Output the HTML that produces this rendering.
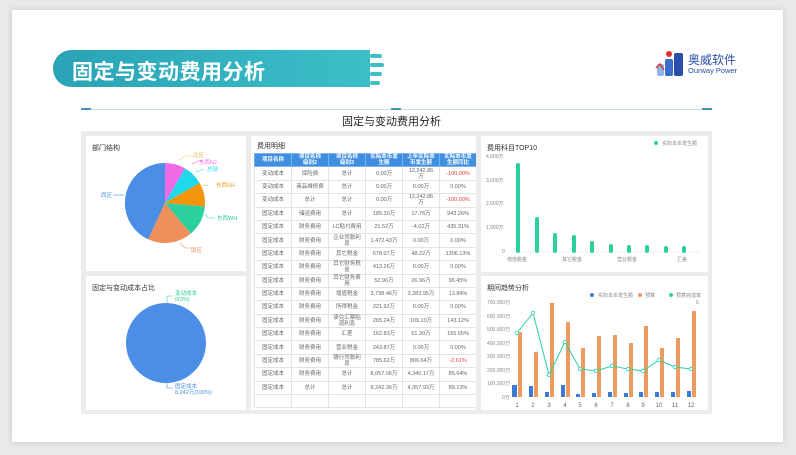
<!DOCTYPE html>
<html><head><meta charset="utf-8"><style>
*{margin:0;padding:0;box-sizing:border-box}
body{width:796px;height:455px;background:#e9e9e9;position:relative;overflow:hidden;font-family:"Liberation Sans","Noto Sans CJK SC",sans-serif}
.slide{position:absolute;left:12px;top:10px;width:771px;height:432px;background:#fff;box-shadow:0 0 6px rgba(0,0,0,.15)}
.abs{position:absolute}
.dash{position:absolute;left:81px;top:131px;width:631px;height:283px;background:#ececec}
.panel{position:absolute;background:#fff;overflow:hidden}
.pt{position:absolute;left:6px;top:7px;font-size:7px;color:#333}
table{border-collapse:collapse;position:absolute;left:3px;top:17px;width:223px;font-size:5.5px;color:#666;table-layout:fixed}
td,th{border:1px solid #e3e3e3;text-align:center;height:13.4px;line-height:6px;padding:0 1px}
th{background:#3f8ee0;color:#fff;font-weight:bold;border-color:#7fb3ea}
.r{color:#e53b3b}
</style></head><body>
<div class="slide"></div>
<div class="abs" style="left:53px;top:50px;width:330px;height:37px;border-radius:19px 0 0 19px;background:linear-gradient(90deg,#2aa3b7,#3cc0c8)"></div>
<div class="abs" style="left:370px;top:50px;width:20px;height:37px;background:#fff"></div>
<div class="abs" style="left:370px;top:54px;width:12px;height:4px;border-radius:2px;background:#3cc0c8"></div>
<div class="abs" style="left:370px;top:63px;width:14px;height:4px;border-radius:2px;background:#3cc0c8"></div>
<div class="abs" style="left:370px;top:72px;width:12px;height:4px;border-radius:2px;background:#3cc0c8"></div>
<div class="abs" style="left:370px;top:81px;width:10px;height:4px;border-radius:2px;background:#3cc0c8"></div>
<div class="abs" style="left:72px;top:56px;font-size:21px;font-weight:bold;color:#fff;letter-spacing:0.5px">固定与变动费用分析</div>
<svg class="abs" style="left:655px;top:48px" width="30" height="30" viewBox="0 0 30 30">
<rect x="2" y="16" width="7" height="12" rx="2" fill="#8fb7e6"/>
<path d="M1 20 L5 16 L9 22" stroke="#d33" stroke-width="1.5" fill="none"/>
<circle cx="14" cy="6" r="3" fill="#d33"/>
<rect x="10" y="11" width="8" height="17" rx="2" fill="#3a6fc9"/>
<rect x="19" y="5" width="9" height="23" rx="2" fill="#2a4fa8"/>
</svg>
<div class="abs" style="left:688px;top:51px;font-size:12px;color:#2a4fa8">奥威软件</div>
<div class="abs" style="left:688px;top:66px;font-size:7.5px;color:#2a4fa8">Ourway Power</div>
<div class="abs" style="left:81px;top:109px;width:631px;height:1px;background:#c9dbe3"></div>
<div class="abs" style="left:81px;top:108px;width:10px;height:2px;background:#4a90b8"></div>
<div class="abs" style="left:391px;top:108px;width:10px;height:2px;background:#4a90b8"></div>
<div class="abs" style="left:702px;top:108px;width:10px;height:2px;background:#4a90b8"></div>
<div class="abs" style="left:342px;top:113px;font-size:11px;color:#222">固定与变动费用分析</div>
<div class="dash">
 <div class="panel" style="left:5px;top:5px;width:160px;height:135px"><div class="pt">部门结构</div></div>
 <div class="panel" style="left:5px;top:145px;width:160px;height:134px"><div class="pt">固定与变动成本占比</div></div>
 <div class="panel" style="left:170px;top:5px;width:225px;height:274px"><div class="pt" style="top:5px">费用明细</div>
 <table>
 <tr><th>项目名称</th><th>项目名称<br>级别2</th><th>项目名称<br>级别3</th><th>实际本币发<br>生额</th><th>上年实际本<br>币发生额</th><th>实际本币发<br>生额同比</th></tr>
 <tr><td>变动成本</td><td>保险费</td><td>总计</td><td>0.00万</td><td>12,242.86<br>万</td><td class="r">-100.00%</td></tr>
 <tr><td>变动成本</td><td>商品维修费</td><td>总计</td><td>0.00万</td><td>0.00万</td><td>0.00%</td></tr>
 <tr><td>变动成本</td><td>总计</td><td>总计</td><td>0.00万</td><td>12,242.86<br>万</td><td class="r">-100.00%</td></tr>
 <tr><td>固定成本</td><td>储运费用</td><td>总计</td><td>185.30万</td><td>17.76万</td><td>943.26%</td></tr>
 <tr><td>固定成本</td><td>财务费用</td><td>LC贴付费用</td><td>21.52万</td><td>-4.02万</td><td>435.31%</td></tr>
 <tr><td>固定成本</td><td>财务费用</td><td>企业贷款利<br>息</td><td>1,472.43万</td><td>0.00万</td><td>0.00%</td></tr>
 <tr><td>固定成本</td><td>财务费用</td><td>其它税金</td><td>678.07万</td><td>48.22万</td><td>1306.13%</td></tr>
 <tr><td>固定成本</td><td>财务费用</td><td>其它财务税<br>金</td><td>413.26万</td><td>0.00万</td><td>0.00%</td></tr>
 <tr><td>固定成本</td><td>财务费用</td><td>其它财务费<br>用</td><td>52.96万</td><td>26.96万</td><td>96.45%</td></tr>
 <tr><td>固定成本</td><td>财务费用</td><td>增值税金</td><td>3,738.46万</td><td>3,283.95万</td><td>13.84%</td></tr>
 <tr><td>固定成本</td><td>财务费用</td><td>所得税金</td><td>221.92万</td><td>0.00万</td><td>0.00%</td></tr>
 <tr><td>固定成本</td><td>财务费用</td><td>承兑汇票贴<br>现利息</td><td>265.24万</td><td>109.10万</td><td>143.12%</td></tr>
 <tr><td>固定成本</td><td>财务费用</td><td>汇差</td><td>162.83万</td><td>61.30万</td><td>165.65%</td></tr>
 <tr><td>固定成本</td><td>财务费用</td><td>营业税金</td><td>243.87万</td><td>0.00万</td><td>0.00%</td></tr>
 <tr><td>固定成本</td><td>财务费用</td><td>银行贷款利<br>息</td><td>785.62万</td><td>806.64万</td><td class="r">-2.61%</td></tr>
 <tr><td>固定成本</td><td>财务费用</td><td>总计</td><td>8,057.06万</td><td>4,340.17万</td><td>85.64%</td></tr>
 <tr><td>固定成本</td><td>总计</td><td>总计</td><td>8,242.36万</td><td>4,357.93万</td><td>89.13%</td></tr>
 <tr><td></td><td></td><td></td><td></td><td></td><td></td></tr>
 </table></div>
 <div class="panel" style="left:400px;top:5px;width:227px;height:136px"><div class="pt">费用科目TOP10</div></div>
 <div class="panel" style="left:400px;top:145px;width:227px;height:134px"><div class="pt">期间趋势分析</div></div>
</div>
<svg class="abs" style="left:0;top:0" width="796" height="455">
<g transform="translate(165,203)">
<path d="M0 0 L0 -40 A40 40 0 0 1 20 -34.6 Z" fill="#f06ae8"/>
<path d="M0 0 L20 -34.6 A40 40 0 0 1 34.6 -20 Z" fill="#1fd8ec"/>
<path d="M0 0 L34.6 -20 A40 40 0 0 1 39.8 3.5 Z" fill="#f5950c"/>
<path d="M0 0 L39.8 3.5 A40 40 0 0 1 25.7 30.6 Z" fill="#2ccf9e"/>
<path d="M0 0 L25.7 30.6 A40 40 0 0 1 -16.9 36.3 Z" fill="#ef8f5c"/>
<path d="M0 0 L-16.9 36.3 A40 40 0 0 1 0 -40 Z" fill="#4a8ee6"/>
</g>
<g fill="none" stroke-width="0.6">
<path d="M179 160 L185 156 L195 156" stroke="#f5d36a"/>
<path d="M192 164 L198 161 L202 161" stroke="#f06ae8"/>
<path d="M196 172 L204 169" stroke="#1fd8ec"/>
<path d="M203 186 L208 185" stroke="#f5950c"/>
<path d="M205 214 L208 218 L215 218" stroke="#2ccf9e"/>
<path d="M180 243 L185 248 L192 248" stroke="#ef8f5c"/>
<path d="M113 195 L124 195" stroke="#4a8ee6"/>
<path d="M167 303 L167 296 L172 296" stroke="#2ccf9e"/>
<path d="M167 383 L167 388 L173 388" stroke="#4a8ee6"/>
</g>
<g font-size="5.5" font-family="Liberation Sans,Noto Sans CJK SC,sans-serif">
<text x="193" y="157" fill="#e0b84a">北区</text>
<text x="199" y="164" fill="#f06ae8">东西NJ</text>
<text x="207" y="171" fill="#1fd8ec">总部</text>
<text x="216" y="187" fill="#f5950c">东西SH</text>
<text x="217" y="220" fill="#2ccf9e">东西WH</text>
<text x="191" y="252" fill="#ef8f5c">南区</text>
<text x="101" y="197" fill="#4a8ee6">西区</text>
<text x="175" y="295" fill="#2ccf9e">变动成本</text>
<text x="175" y="301" fill="#2ccf9e">0(0%)</text>
<text x="175" y="388" fill="#4a8ee6">固定成本</text>
<text x="175" y="394" fill="#4a8ee6">8,242万(100%)</text>
</g>
<circle cx="166" cy="343" r="40" fill="#4a8ee6"/>
<g font-size="5" fill="#888" font-family="Liberation Sans,Noto Sans CJK SC,sans-serif">
<text x="486" y="158">4,000万</text><text x="486" y="182">3,000万</text><text x="486" y="205">2,000万</text><text x="486" y="229">1,000万</text><text x="502" y="253">0</text>
<text x="507" y="261">增值税金</text><text x="562" y="261">其它税金</text><text x="617" y="261">营业税金</text><text x="677" y="261">汇差</text>
<text x="662" y="145">实际本币发生额</text>
</g>
<circle cx="656" cy="143" r="2" fill="#2ccf9e"/>
<line x1="510" y1="252" x2="700" y2="252" stroke="#ddd" stroke-width="0.6"/>
<g stroke="#2ccf9e" stroke-width="4" stroke-linecap="round">
<line x1="518" y1="251" x2="518" y2="165"/>
<line x1="537" y1="251" x2="537" y2="219"/>
<line x1="555" y1="251" x2="555" y2="235"/>
<line x1="574" y1="251" x2="574" y2="237"/>
<line x1="592" y1="251" x2="592" y2="243"/>
<line x1="611" y1="251" x2="611" y2="246"/>
<line x1="629" y1="251" x2="629" y2="247"/>
<line x1="647" y1="251" x2="647" y2="247"/>
<line x1="666" y1="251" x2="666" y2="248"/>
<line x1="684" y1="251" x2="684" y2="248"/>
</g>
<g font-size="5" fill="#888" font-family="Liberation Sans,Noto Sans CJK SC,sans-serif">
<text x="487" y="304">700,000万</text><text x="487" y="318">600,000万</text><text x="487" y="331">500,000万</text><text x="487" y="345">400,000万</text><text x="487" y="358">300,000万</text><text x="487" y="372">200,000万</text><text x="487" y="385">100,000万</text><text x="502" y="399">0万</text>
<text x="598" y="297">实际本币发生额</text><text x="645" y="297">预算</text><text x="676" y="297">预算完成率</text>
<text x="696" y="304">0</text>
</g>
<circle cx="592" cy="295" r="2" fill="#3a7bd5"/><circle cx="640" cy="295" r="2" fill="#ef9a60"/><circle cx="671" cy="295" r="2" fill="#2ccf9e"/>
<g font-size="6" fill="#666" font-family="Liberation Sans,sans-serif" text-anchor="middle">
<text x="517" y="407">1</text><text x="533" y="407">2</text><text x="549" y="407">3</text><text x="565" y="407">4</text><text x="580" y="407">5</text><text x="596" y="407">6</text><text x="612" y="407">7</text><text x="628" y="407">8</text><text x="643" y="407">9</text><text x="659" y="407">10</text><text x="675" y="407">11</text><text x="691" y="407">12</text>
</g>
<g fill="#ef9a60">
<rect x="518" y="332" width="4" height="65"/><rect x="534" y="352" width="4" height="45"/><rect x="550" y="303" width="4" height="94"/><rect x="566" y="322" width="4" height="75"/><rect x="581" y="348" width="4" height="49"/><rect x="597" y="336" width="4" height="61"/><rect x="613" y="335" width="4" height="62"/><rect x="629" y="343" width="4" height="54"/><rect x="644" y="326" width="4" height="71"/><rect x="660" y="348" width="4" height="49"/><rect x="676" y="338" width="4" height="59"/><rect x="692" y="311" width="4" height="86"/>
</g>
<g fill="#3a7bd5">
<rect x="512" y="385" width="5" height="12"/><rect x="529" y="386" width="4" height="11"/><rect x="545" y="392" width="4" height="5"/><rect x="561" y="385" width="4" height="12"/><rect x="576" y="394" width="4" height="3"/><rect x="592" y="393" width="4" height="4"/><rect x="608" y="392" width="4" height="5"/><rect x="624" y="393" width="4" height="4"/><rect x="639" y="392" width="4" height="5"/><rect x="655" y="392" width="4" height="5"/><rect x="671" y="392" width="4" height="5"/><rect x="687" y="391" width="4" height="6"/>
</g>
<polyline fill="none" stroke="#2ccf9e" stroke-width="1" points="517,333 533,313 549,375 565,342 580,369 596,371 612,366 628,369 643,371 659,360 675,367 691,369"/>
<g fill="#fff" stroke="#2ccf9e" stroke-width="0.8">
<circle cx="517" cy="333" r="1.8"/><circle cx="533" cy="313" r="1.8"/><circle cx="549" cy="375" r="1.8"/><circle cx="565" cy="342" r="1.8"/><circle cx="580" cy="369" r="1.8"/><circle cx="596" cy="371" r="1.8"/><circle cx="612" cy="366" r="1.8"/><circle cx="628" cy="369" r="1.8"/><circle cx="643" cy="371" r="1.8"/><circle cx="659" cy="360" r="1.8"/><circle cx="675" cy="367" r="1.8"/><circle cx="691" cy="369" r="1.8"/>
</g>
</svg>
</body></html>
